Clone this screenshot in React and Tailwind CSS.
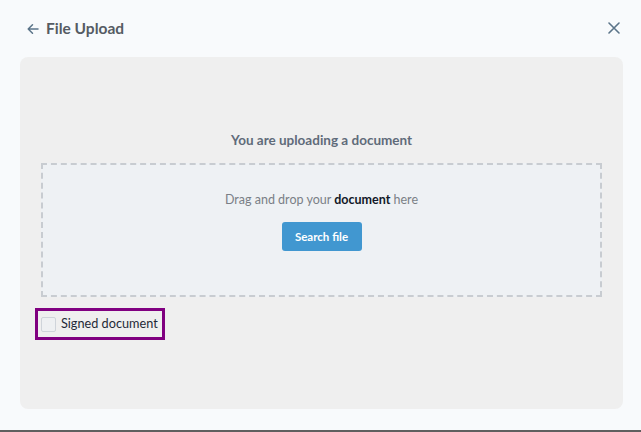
import { useState } from 'react';

function ArrowLeft() {
    return (
        <svg width="12" height="12" viewBox="0 0 12 12" fill="none" stroke="#5b7489" strokeWidth="1.5" strokeLinecap="round" strokeLinejoin="round">
            <path d="M11 6H1.2M5.5 1.7L1.2 6L5.5 10.3" />
        </svg>
    );
}

function CloseIcon() {
    return (
        <svg width="12" height="12" viewBox="0 0 12 12" fill="none" stroke="#5b7489" strokeWidth="1.6" strokeLinecap="round">
            <path d="M1 1L11 11M11 1L1 11" />
        </svg>
    );
}

export default function App() {
    const [signed, setSigned] = useState(false);

    return (
        <div className="w-[641px] h-[432px] bg-[#f8fafc] flex flex-col border-b-2 border-[#5f5f5f]" style={{ fontFamily: 'Lato, "Open Sans", sans-serif' }}>
            {/* Header */}
            <div className="flex items-center h-[57px] pl-[27px] pr-[20px] pt-[1px]">
                <button className="flex items-center gap-[7px]">
                    <ArrowLeft />
                    <span className="text-[15.5px] font-bold text-[#555b63]">File Upload</span>
                </button>
                <button className="ml-auto mr-[1px] -mt-[2px]">
                    <CloseIcon />
                </button>
            </div>

            {/* Upload panel */}
            <div className="ml-[20px] mr-[18px] mb-[21px] flex-1 bg-[#efefef] rounded-[8px] px-[21px] flex flex-col">
                <h2 className="mt-[74px] text-center text-[13.5px] font-bold text-[#5f6b7a] leading-[18px]">
                    You are uploading a document
                </h2>

                <div className="mt-[14px] h-[134px] border-2 border-dashed border-[#c8ccd1] bg-[#eef1f4] flex flex-col items-center">
                    <p className="mt-[27px] text-[12.5px] text-[#7a7f86] leading-[16px]">
                        Drag and drop your <span className="font-bold text-[#111827]">document</span> here
                    </p>
                    <button className="mt-[14px] w-[80px] h-[29px] rounded-[3px] bg-[#4197d0] text-white text-[11.5px] font-bold">
                        Search file
                    </button>
                </div>

                <label className="-ml-[6px] mt-[11px] w-fit h-[32px] border-[3px] border-[#800080] flex items-center gap-[5px] pl-[3px] pr-[4px] cursor-pointer whitespace-nowrap">
                    <input
                        type="checkbox"
                        checked={signed}
                        onChange={(e) => setSigned(e.target.checked)}
                        className="appearance-none w-[15px] h-[15px] bg-[#eef0f2] border border-[#cfd4da] rounded-[2px] checked:bg-[#4197d0]"
                    />
                    <span className="text-[12.7px] text-[#1f2937]">Signed document</span>
                </label>
            </div>
        </div>
    );
}
